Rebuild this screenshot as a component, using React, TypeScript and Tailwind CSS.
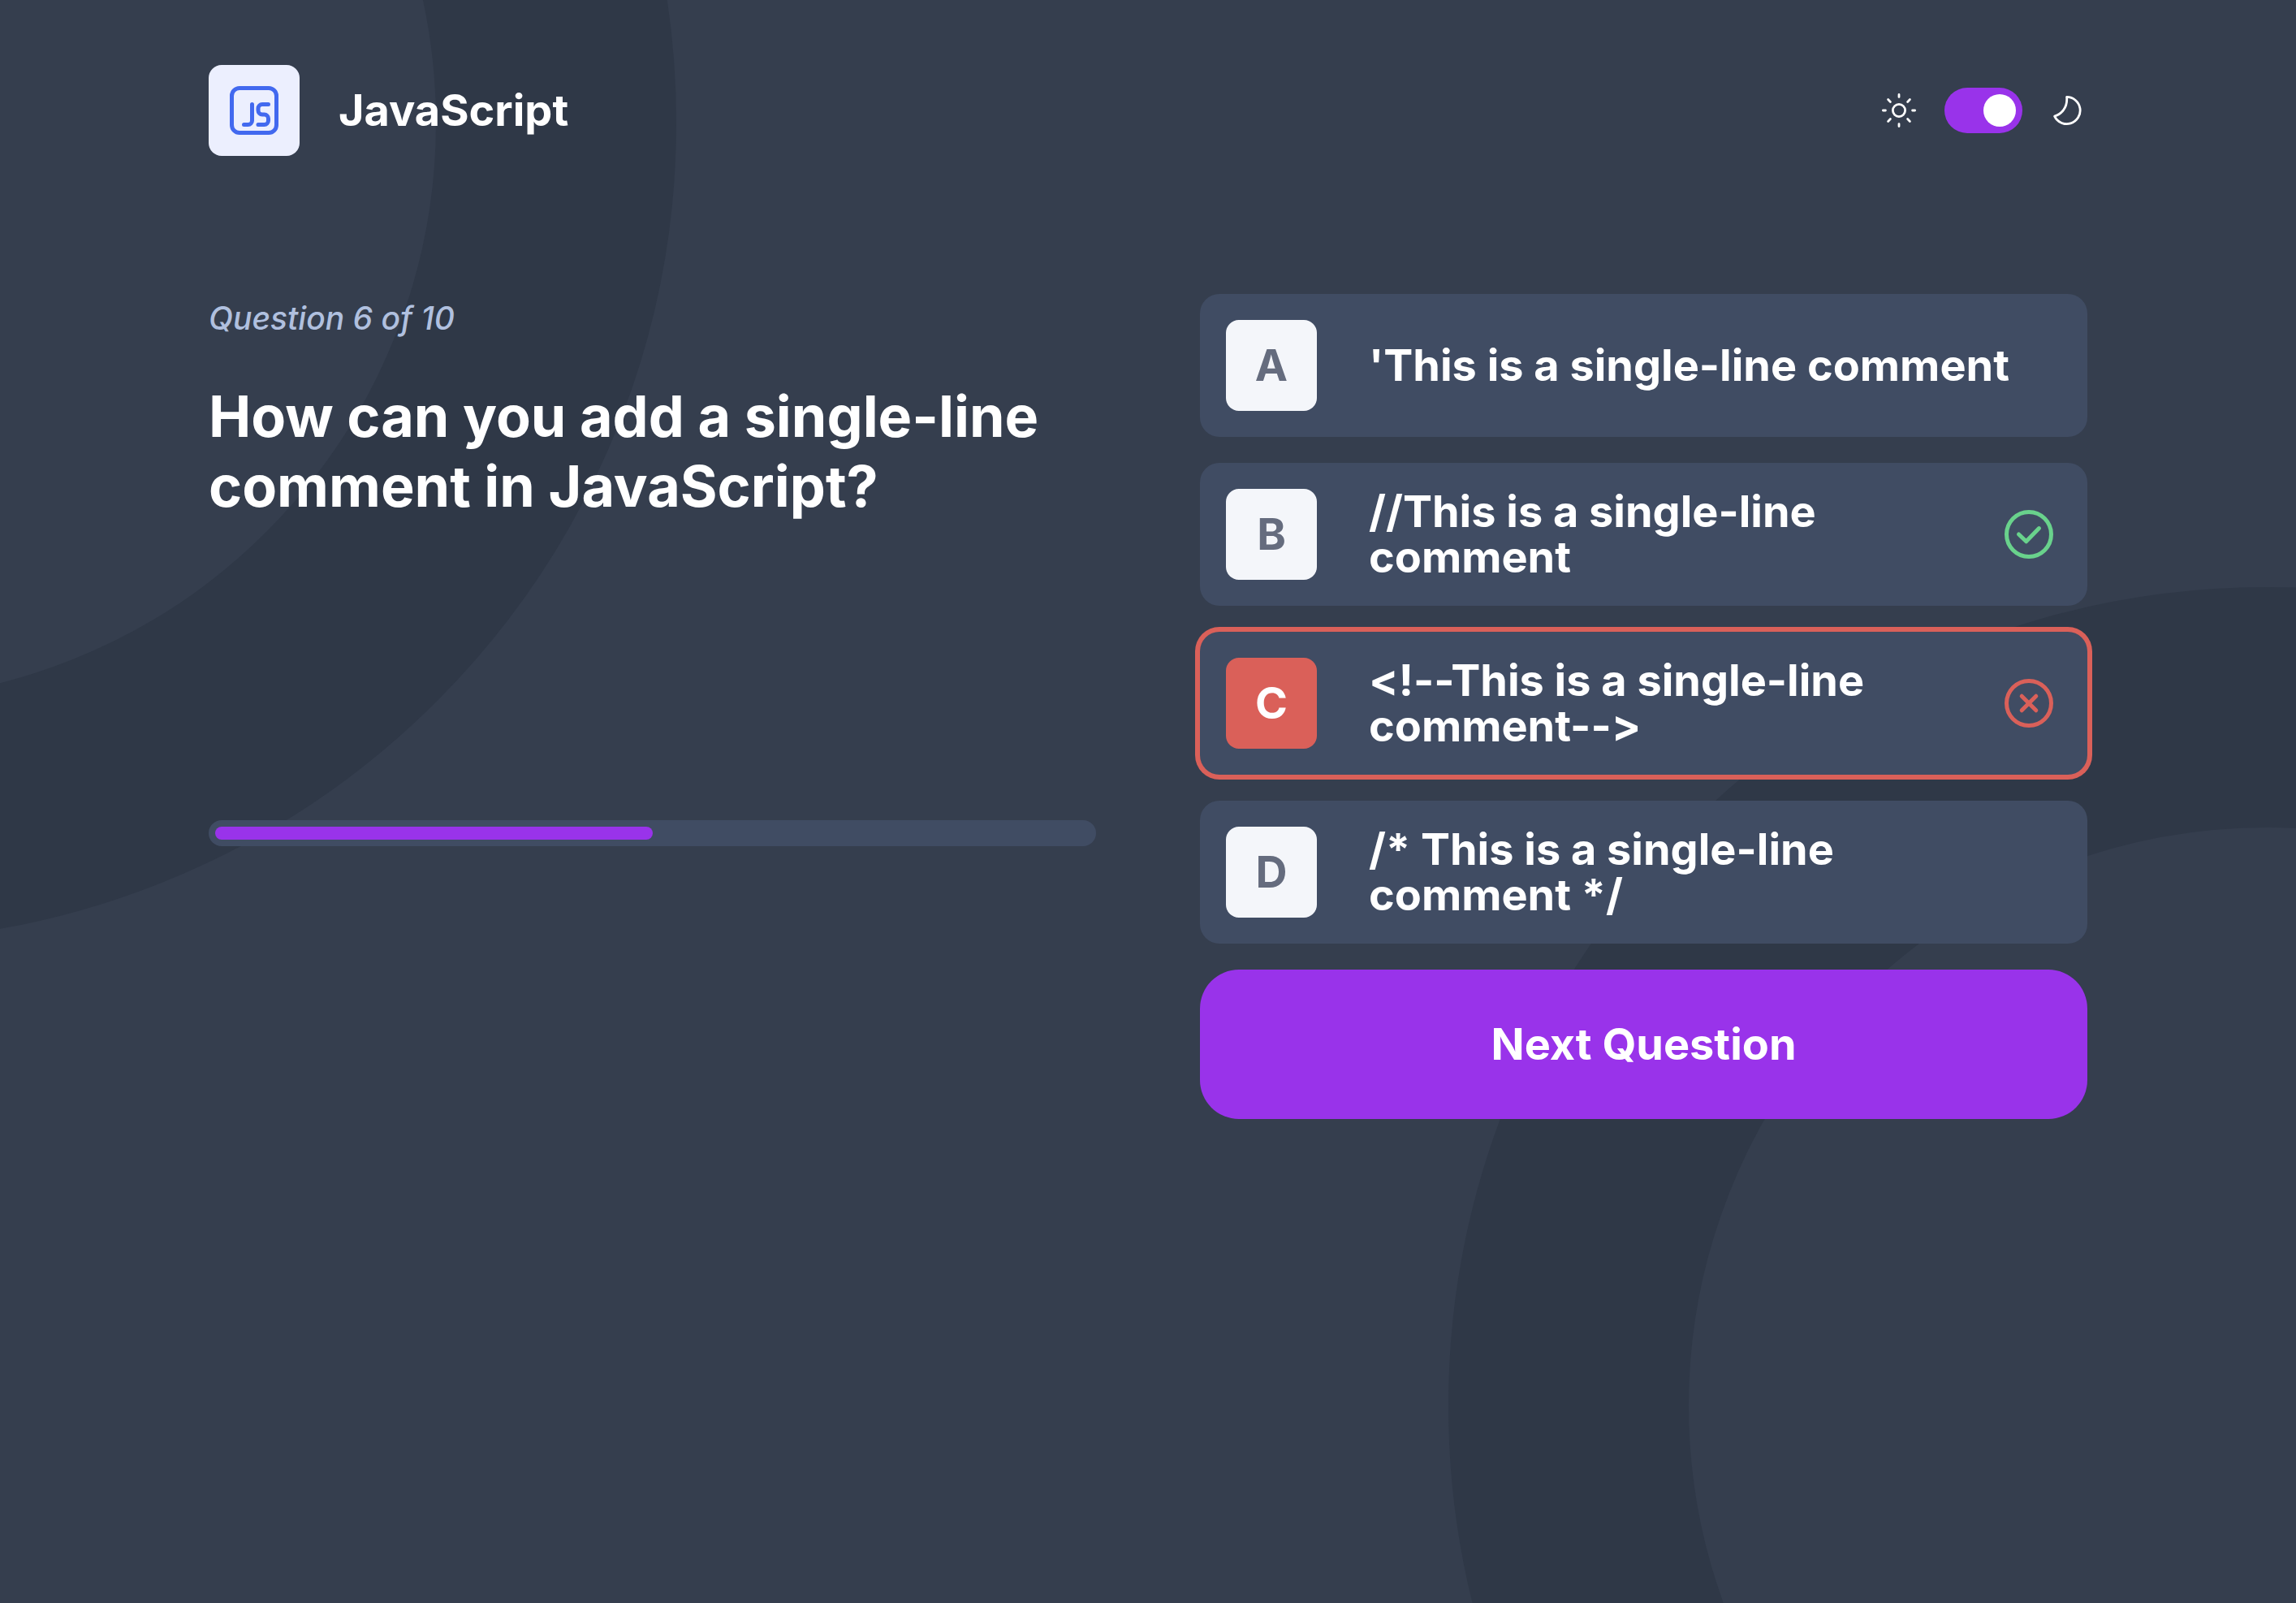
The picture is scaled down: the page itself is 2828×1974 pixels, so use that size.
import { useState, type ReactNode } from "react";
import clsx from "clsx";

type Status = "idle" | "correct" | "wrong";

const answers: { letter: string; text: string; status: Status }[] = [
  { letter: "A", text: "'This is a single-line comment", status: "idle" },
  { letter: "B", text: "//This is a single-line comment", status: "correct" },
  { letter: "C", text: "<!--This is a single-line comment-->", status: "wrong" },
  { letter: "D", text: "/* This is a single-line comment */", status: "idle" },
];

function Backdrop() {
  return (
    <div aria-hidden="true" className="pointer-events-none absolute inset-0">
      <div className="absolute -top-[857px] -left-[1183px] size-[2016px] rounded-full border-[296px] border-[#2F3847]" />
      <div className="absolute -right-[972px] -bottom-[765px] size-[2016px] rounded-full border-[296px] border-[#2F3847]" />
    </div>
  );
}

function ResultIcon({ label, className, children }: { label: string; className: string; children: ReactNode }) {
  return (
    <svg
      role="img"
      aria-label={label}
      viewBox="0 0 40 40"
      fill="none"
      stroke="currentColor"
      strokeWidth="2.5"
      strokeLinecap="round"
      strokeLinejoin="round"
      className={clsx("size-20 shrink-0", className)}
    >
      <circle cx="20" cy="20" r="13.75" />
      {children}
    </svg>
  );
}

function JavaScriptLogo() {
  return (
    <svg
      aria-hidden="true"
      viewBox="0 0 40 40"
      fill="none"
      stroke="#4269EF"
      strokeWidth="2.5"
      strokeLinecap="round"
      strokeLinejoin="round"
      className="size-20"
    >
      <rect x="6.25" y="6.25" width="27.5" height="27.5" rx="4.75" />
      <path d="M18.75 16.25v10c0 1.4-1.1 2.5-2.5 2.5h-2.5" />
      <path d="M28.75 16.25H25a2.5 2.5 0 0 0-2.5 2.5V20a2.5 2.5 0 0 0 2.5 2.5h1.25a2.5 2.5 0 0 1 2.5 2.5v1.25a2.5 2.5 0 0 1-2.5 2.5H22.5" />
    </svg>
  );
}

function SunIcon() {
  return (
    <svg aria-hidden="true" viewBox="0 0 24 24" fill="none" stroke="white" strokeWidth="1.4" strokeLinecap="round" className="size-12">
      <circle cx="12" cy="12" r="3.8" />
      <path d="M12 2.2v1.5M12 20.3v1.5M2.2 12h1.5M20.3 12h1.5M5.3 5.3l1.4 1.4M17.3 17.3l1.4 1.4M18.7 5.3l-1.4 1.4M6.7 17.3l-1.4 1.4" />
    </svg>
  );
}

function MoonIcon() {
  return (
    <svg aria-hidden="true" viewBox="0 0 24 24" fill="none" stroke="white" strokeWidth="1.4" strokeLinejoin="round" className="size-12">
      <path d="M11.3 3.7A8.3 8.3 0 1 1 3.8 15.6C7.8 14.4 12 10.4 11.3 3.7Z" />
    </svg>
  );
}

function Answer({ letter, text, status }: { letter: string; text: string; status: Status }) {
  return (
    <button
      type="button"
      aria-pressed={status === "wrong"}
      className={clsx(
        "flex w-full items-center gap-16 rounded-3xl bg-[#404C63] p-8 text-left text-[54px]/[56px] font-bold text-white",
        status === "wrong" && "ring-6 ring-[#DA6059]",
      )}
    >
      <span
        className={clsx(
          "flex size-28 shrink-0 items-center justify-center rounded-2xl",
          status === "wrong" ? "bg-[#DA6059] text-white" : "bg-[#F4F6FA] text-[#656C7E]",
        )}
      >
        {letter}
      </span>
      <span className="flex-1 pr-8">{text}</span>
      {status === "correct" && (
        <ResultIcon label="Correct answer" className="text-[#69D28C]">
          <path d="M13.75 20l4.6 4.4 7.9-8.1" />
        </ResultIcon>
      )}
      {status === "wrong" && (
        <ResultIcon label="Wrong answer" className="text-[#DA6059]">
          <path d="M15.6 15.6l8.8 8.8M24.4 15.6l-8.8 8.8" />
        </ResultIcon>
      )}
    </button>
  );
}

export default function App() {
  const [dark, setDark] = useState(true);

  return (
    <div className="relative min-h-screen overflow-hidden bg-[#353E4E] font-['Inter',sans-serif] text-white [font-feature-settings:'calt'_0]">
      <Backdrop />
      <div className="relative px-[257px] pt-20 pb-20">
        <header className="flex items-center justify-between">
          <div className="flex items-center gap-12">
            <div className="flex size-28 items-center justify-center rounded-2xl bg-[#ECEFFE]">
              <JavaScriptLogo />
            </div>
            <p className="text-[54px]/[56px] font-bold">JavaScript</p>
          </div>
          <label className="flex items-center gap-8">
            <SunIcon />
            <input
              type="checkbox"
              role="switch"
              aria-label="Dark mode"
              checked={dark}
              onChange={(e) => setDark(e.target.checked)}
              className="flex h-14 w-24 appearance-none items-center rounded-full bg-[#9933EA] px-2 before:size-10 before:rounded-full before:bg-white checked:justify-end"
            />
            <MoonIcon />
          </label>
        </header>

        <main className="mt-[170px] grid grid-cols-2 items-start gap-32">
          <section>
            <p className="text-[39px]/[60px] font-medium text-[#B0C0DF] italic">Question 6 of 10</p>
            <h1 className="mt-12 text-[70px]/[86px] font-bold">How can you add a single-line comment in JavaScript?</h1>
            <div
              role="progressbar"
              aria-label="Quiz progress"
              aria-valuemin={0}
              aria-valuemax={10}
              aria-valuenow={5}
              className="mt-[368px] rounded-full bg-[#404C63] p-2"
            >
              <div className="h-4 w-1/2 rounded-full bg-[#9933EA]" />
            </div>
          </section>

          <section className="flex flex-col gap-8">
            {answers.map((a) => (
              <Answer key={a.letter} {...a} />
            ))}
            <button type="button" className="rounded-[48px] bg-[#9933EA] py-16 text-center text-[54px]/[56px] font-bold text-white">
              Next Question
            </button>
          </section>
        </main>
      </div>
    </div>
  );
}
